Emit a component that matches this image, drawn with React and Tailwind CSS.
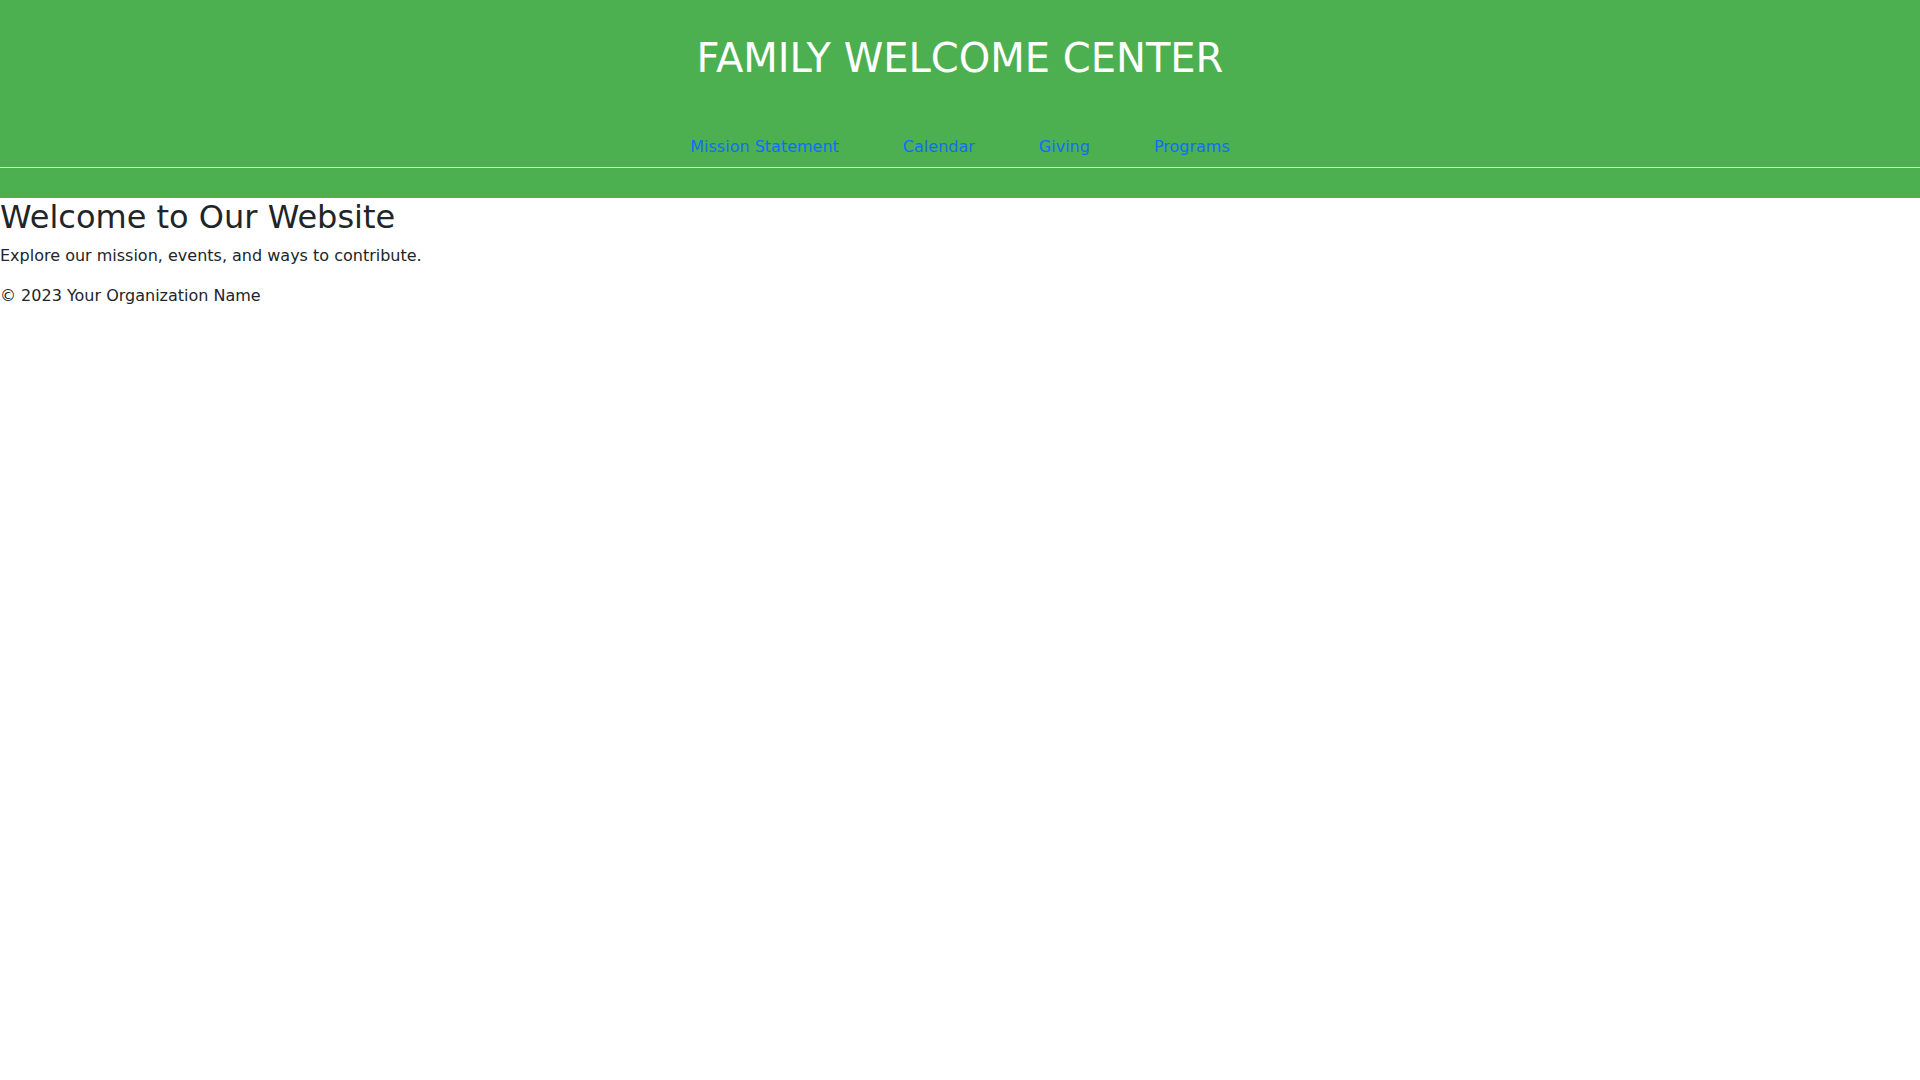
export default function App() {
  return (
    <div className="min-h-[1080px] bg-white text-[#212529] text-[16px] leading-[1.5]" style={{ fontFamily: '"DejaVu Sans", sans-serif' }}>
      <header className="bg-[#4caf50] pt-[34px] pb-[30px] text-center">
        <h1 className="text-[40px] leading-[1.2] font-normal text-white m-0">FAMILY WELCOME CENTER</h1>
        <nav className="mt-[45px] border-b border-[#dee2e6]">
          <ul className="flex justify-center gap-8 m-0 p-0 list-none">
            <li><a href="#" className="block px-4 py-2 text-[#0d6efd]">Mission Statement</a></li>
            <li><a href="#" className="block px-4 py-2 text-[#0d6efd]">Calendar</a></li>
            <li><a href="#" className="block px-4 py-2 text-[#0d6efd]">Giving</a></li>
            <li><a href="#" className="block px-4 py-2 text-[#0d6efd]">Programs</a></li>
          </ul>
        </nav>
      </header>
      <main>
        <h2 className="text-[32px] leading-[1.2] font-normal mt-0 mb-2">Welcome to Our Website</h2>
        <p className="mt-0 mb-4">Explore our mission, events, and ways to contribute.</p>
      </main>
      <footer>
        <p className="m-0">© 2023 Your Organization Name</p>
      </footer>
    </div>
  );
}
